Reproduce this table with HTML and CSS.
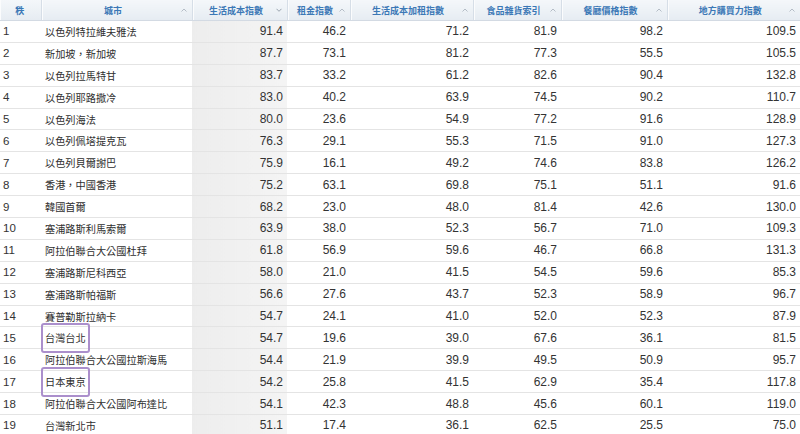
FILE: index.html
```html
<!DOCTYPE html>
<html lang="zh-Hant">
<head>
<meta charset="utf-8">
<title>生活成本指數</title>
<link rel="stylesheet" href="styles.css">
</head>
<body>
<table class="grid">
  <colgroup>
    <col class="c-rank"><col class="c-city"><col class="c-col"><col class="c-rent"><col class="c-colrent"><col class="c-groc"><col class="c-rest"><col class="c-ppp">
  </colgroup>
  <thead>
    <tr>
      <th><div class="hd"><span class="lbl">秩</span></div></th>
      <th><div class="hd"><span class="lbl">城市</span><svg class="arr" viewBox="0 0 6 4"><path d="M0.5 3.5 L3 1 L5.5 3.5"/></svg></div></th>
      <th><div class="hd"><span class="lbl">生活成本指數</span><svg class="arr dn" viewBox="0 0 6 4"><path d="M0.5 0.8 L3 3.3 L5.5 0.8"/></svg></div></th>
      <th><div class="hd"><span class="lbl">租金指數</span><svg class="arr" viewBox="0 0 6 4"><path d="M0.5 3.5 L3 1 L5.5 3.5"/></svg></div></th>
      <th><div class="hd"><span class="lbl">生活成本加租指數</span><svg class="arr" viewBox="0 0 6 4"><path d="M0.5 3.5 L3 1 L5.5 3.5"/></svg></div></th>
      <th><div class="hd"><span class="lbl">食品雜貨索引</span><svg class="arr" viewBox="0 0 6 4"><path d="M0.5 3.5 L3 1 L5.5 3.5"/></svg></div></th>
      <th><div class="hd"><span class="lbl">餐廳價格指數</span><svg class="arr" viewBox="0 0 6 4"><path d="M0.5 3.5 L3 1 L5.5 3.5"/></svg></div></th>
      <th><div class="hd"><span class="lbl">地方購買力指數</span><svg class="arr" viewBox="0 0 6 4"><path d="M0.5 3.5 L3 1 L5.5 3.5"/></svg></div></th>
    </tr>
  </thead>
  <tbody>
    <tr><td class="rank">1</td><td class="city">以色列特拉維夫雅法</td><td class="num sorted">91.4</td><td class="num">46.2</td><td class="num">71.2</td><td class="num">81.9</td><td class="num">98.2</td><td class="num">109.5</td></tr>
    <tr><td class="rank">2</td><td class="city">新加坡，新加坡</td><td class="num sorted">87.7</td><td class="num">73.1</td><td class="num">81.2</td><td class="num">77.3</td><td class="num">55.5</td><td class="num">105.5</td></tr>
    <tr><td class="rank">3</td><td class="city">以色列拉馬特甘</td><td class="num sorted">83.7</td><td class="num">33.2</td><td class="num">61.2</td><td class="num">82.6</td><td class="num">90.4</td><td class="num">132.8</td></tr>
    <tr><td class="rank">4</td><td class="city">以色列耶路撒冷</td><td class="num sorted">83.0</td><td class="num">40.2</td><td class="num">63.9</td><td class="num">74.5</td><td class="num">90.2</td><td class="num">110.7</td></tr>
    <tr><td class="rank">5</td><td class="city">以色列海法</td><td class="num sorted">80.0</td><td class="num">23.6</td><td class="num">54.9</td><td class="num">77.2</td><td class="num">91.6</td><td class="num">128.9</td></tr>
    <tr><td class="rank">6</td><td class="city">以色列佩塔提克瓦</td><td class="num sorted">76.3</td><td class="num">29.1</td><td class="num">55.3</td><td class="num">71.5</td><td class="num">91.0</td><td class="num">127.3</td></tr>
    <tr><td class="rank">7</td><td class="city">以色列貝爾謝巴</td><td class="num sorted">75.9</td><td class="num">16.1</td><td class="num">49.2</td><td class="num">74.6</td><td class="num">83.8</td><td class="num">126.2</td></tr>
    <tr><td class="rank">8</td><td class="city">香港，中國香港</td><td class="num sorted">75.2</td><td class="num">63.1</td><td class="num">69.8</td><td class="num">75.1</td><td class="num">51.1</td><td class="num">91.6</td></tr>
    <tr><td class="rank">9</td><td class="city">韓國首爾</td><td class="num sorted">68.2</td><td class="num">23.0</td><td class="num">48.0</td><td class="num">81.4</td><td class="num">42.6</td><td class="num">130.0</td></tr>
    <tr><td class="rank">10</td><td class="city">塞浦路斯利馬索爾</td><td class="num sorted">63.9</td><td class="num">38.0</td><td class="num">52.3</td><td class="num">56.7</td><td class="num">71.0</td><td class="num">109.3</td></tr>
    <tr><td class="rank">11</td><td class="city">阿拉伯聯合大公國杜拜</td><td class="num sorted">61.8</td><td class="num">56.9</td><td class="num">59.6</td><td class="num">46.7</td><td class="num">66.8</td><td class="num">131.3</td></tr>
    <tr><td class="rank">12</td><td class="city">塞浦路斯尼科西亞</td><td class="num sorted">58.0</td><td class="num">21.0</td><td class="num">41.5</td><td class="num">54.5</td><td class="num">59.6</td><td class="num">85.3</td></tr>
    <tr><td class="rank">13</td><td class="city">塞浦路斯帕福斯</td><td class="num sorted">56.6</td><td class="num">27.6</td><td class="num">43.7</td><td class="num">52.3</td><td class="num">58.9</td><td class="num">96.7</td></tr>
    <tr><td class="rank">14</td><td class="city">賽普勒斯拉納卡</td><td class="num sorted">54.7</td><td class="num">24.1</td><td class="num">41.0</td><td class="num">52.0</td><td class="num">52.3</td><td class="num">87.9</td></tr>
    <tr><td class="rank">15</td><td class="city"><span class="mark">台灣台北</span></td><td class="num sorted">54.7</td><td class="num">19.6</td><td class="num">39.0</td><td class="num">67.6</td><td class="num">36.1</td><td class="num">81.5</td></tr>
    <tr><td class="rank">16</td><td class="city">阿拉伯聯合大公國拉斯海馬</td><td class="num sorted">54.4</td><td class="num">21.9</td><td class="num">39.9</td><td class="num">49.5</td><td class="num">50.9</td><td class="num">95.7</td></tr>
    <tr><td class="rank">17</td><td class="city"><span class="mark">日本東京</span></td><td class="num sorted">54.2</td><td class="num">25.8</td><td class="num">41.5</td><td class="num">62.9</td><td class="num">35.4</td><td class="num">117.8</td></tr>
    <tr><td class="rank">18</td><td class="city">阿拉伯聯合大公國阿布達比</td><td class="num sorted">54.1</td><td class="num">42.3</td><td class="num">48.8</td><td class="num">45.6</td><td class="num">60.1</td><td class="num">119.0</td></tr>
    <tr><td class="rank">19</td><td class="city">台灣新北市</td><td class="num sorted">51.1</td><td class="num">17.4</td><td class="num">36.1</td><td class="num">62.5</td><td class="num">25.5</td><td class="num">75.0</td></tr>
  </tbody>
</table>
</body>
</html>
```

FILE: styles.css
```css
html, body {
  margin: 0;
  padding: 0;
  background: #ffffff;
}

body {
  font-family: "Liberation Sans", Arial, "Noto Sans CJK TC", sans-serif;
  color: #333333;
  overflow: hidden;
}

.grid {
  width: 800px;
  border-collapse: collapse;
  table-layout: fixed;
}

.c-rank { width: 41px; }
.c-city { width: 151px; }
.c-col { width: 95px; }
.c-rent { width: 63px; }
.c-colrent { width: 123px; }
.c-groc { width: 88px; }
.c-rest { width: 106px; }
.c-ppp { width: 133px; }

.grid thead th {
  height: 20px;
  padding: 0;
  background: linear-gradient(to bottom, #f4f7fa 0%, #e6ecf2 100%);
  border-bottom: 1px solid #d3dae3;
  border-left: 1px solid #d6dee7;
  box-shadow: inset 1px 0 0 #fbfcfd;
  font-family: "Noto Sans CJK TC", "Liberation Sans", sans-serif;
  font-size: 9px;
  font-weight: 700;
  color: #3b78b6;
}

.grid thead th:first-child {
  border-left: none;
}

.hd {
  display: flex;
  align-items: center;
  height: 20px;
  padding: 0 5px 0 4px;
}

.lbl {
  flex: 1;
  text-align: center;
  white-space: nowrap;
}

.arr {
  width: 6px;
  height: 4px;
  flex: none;
  fill: none;
  stroke: #b4bcc6;
  stroke-width: 1;
}

.arr.dn {
  stroke: #98a2ad;
}

.grid tbody td {
  height: 21.9px;
  padding: 0 4px;
  border-bottom: 1px solid #e4e4e4;
  font-size: 12px;
  white-space: nowrap;
  box-sizing: border-box;
}

.grid tbody td.rank {
  padding-left: 3px;
  font-size: 11.5px;
}

.grid tbody td.city {
  font-family: "Noto Sans CJK TC", sans-serif;
  font-size: 10.2px;
  color: #2f2f2f;
}

.grid tbody td.num {
  text-align: right;
}

.grid tbody td.sorted {
  background: linear-gradient(to right, #ededed 0%, #f4f4f4 100%);
}

.mark {
  position: relative;
  display: inline-block;
}

.mark::after {
  content: "";
  position: absolute;
  left: -4px;
  right: -4px;
  top: calc(50% - 15px);
  height: 26px;
  border: 2px solid #ab8fcc;
  border-radius: 3px;
}
```
